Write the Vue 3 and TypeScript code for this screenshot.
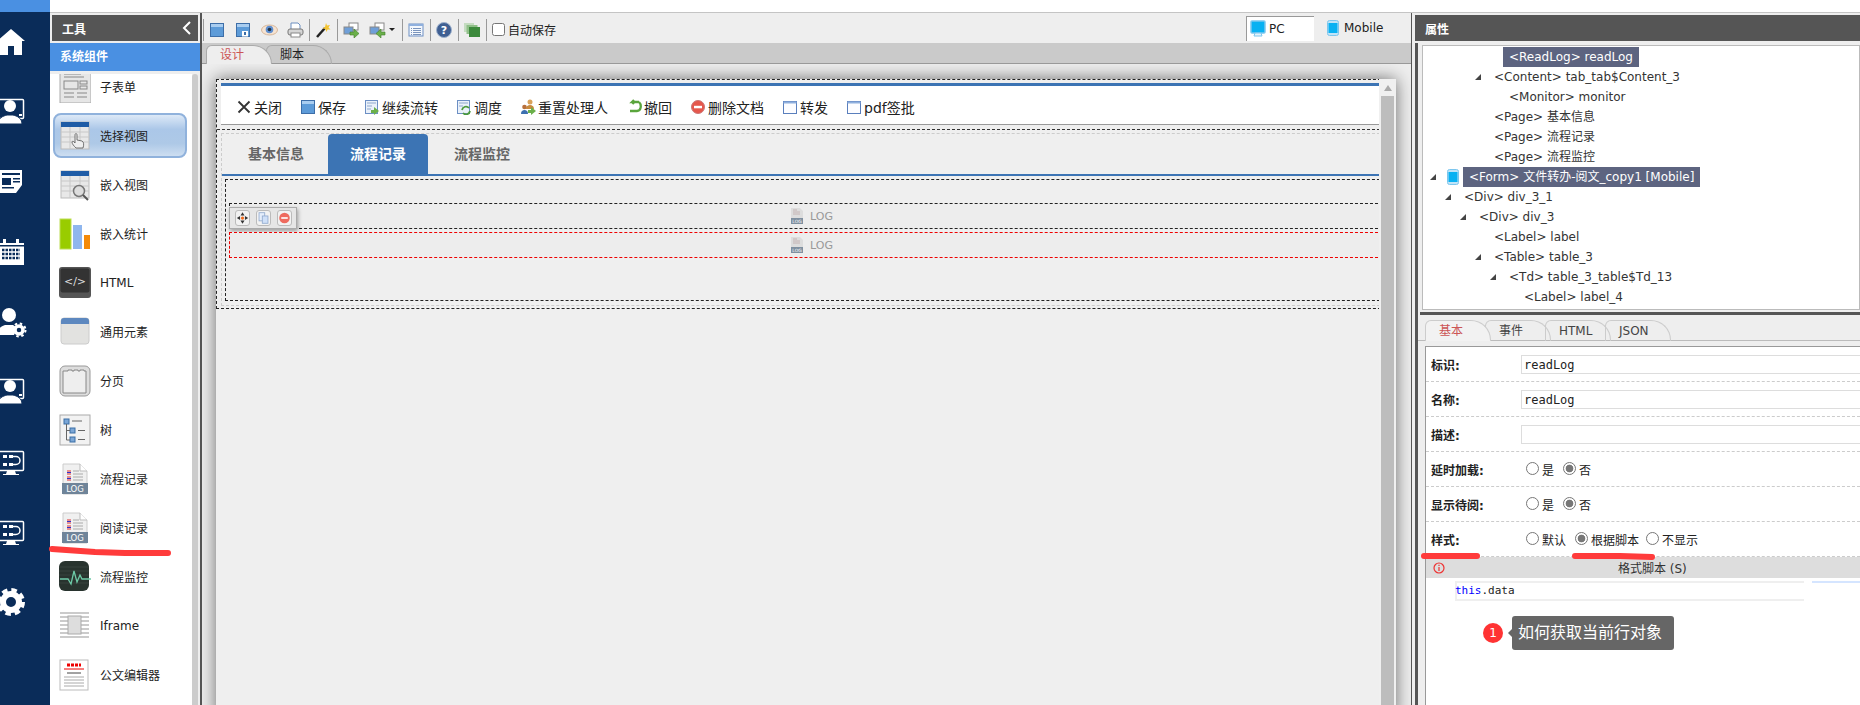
<script setup lang="ts">
const monitor = '<rect x="3.5" y="5.5" width="25" height="19" rx="1" fill="none" stroke="#fff" stroke-width="1.5"/><path d="M12 25h8l1 3h3v1H8v-1h3z" fill="#fff"/>'
const person = '<rect x="3.5" y="3.5" width="25" height="19" rx="1" fill="none" stroke="#fff" stroke-width="1.5"/><circle cx="15" cy="10" r="6" fill="#fff"/><path d="M3 28c0-6 5-8 9-9h6c4 1 9 3 9 9z" fill="#fff" stroke="#0a2c59" stroke-width="1"/><rect x="24" y="18" width="3" height="2" fill="#fff"/>'
const flow = monitor + '<g fill="#fff"><rect x="8" y="9" width="4" height="3"/><rect x="14" y="9" width="4" height="3"/><rect x="8" y="17" width="4" height="3"/><rect x="14" y="17" width="4" height="3"/></g><path d="M18 10.500h3a4 4 0 0 1 0 8h-3" fill="none" stroke="#fff" stroke-width="1.500"/>'

const navIcons: string[] = [
  '<path d="M16 3 30 15h-3v14h-8v-9h-6v9H5V15H2z" fill="#fff"/>',
  person,
  '<path d="M5 4h22v15l-6 8H5z" fill="#fff"/><g fill="#0a2c59"><rect x="7" y="7" width="18" height="2"/><rect x="7" y="12" width="9" height="7"/><rect x="18" y="12" width="7" height="1.500"/><rect x="18" y="15" width="7" height="1.500"/><rect x="7" y="21" width="12" height="1.500"/></g>',
  '<path d="M3 7h26v22H3z" fill="#fff"/><rect x="8" y="3" width="3" height="6" fill="#fff"/><rect x="21" y="3" width="3" height="6" fill="#fff"/><rect x="3" y="9" width="26" height="1.500" fill="#0a2c59"/><path d="M7 14h18M7 18h18M7 22h18" stroke="#0a2c59" stroke-width="2.500" stroke-dasharray="2.500 1"/>',
  '<circle cx="14" cy="9" r="7" fill="#fff"/><path d="M2 29c0-7 5-9 8-10h8l3 2-2 8z" fill="#fff"/><circle cx="24" cy="24" r="4" fill="none" stroke="#fff" stroke-width="3.500"/><circle cx="24" cy="24" r="6.500" fill="none" stroke="#fff" stroke-width="2" stroke-dasharray="2.500 2.600"/>',
  person,
  flow,
  flow,
  '<circle cx="16" cy="16" r="8" fill="none" stroke="#fff" stroke-width="6"/><circle cx="16" cy="16" r="12" fill="none" stroke="#fff" stroke-width="4" stroke-dasharray="5.500 3.920"/>',
]

const gridBase = '<rect x="2" y="2" width="28" height="27" fill="#e8e8e8" stroke="#bbb"/><rect x="2" y="2" width="28" height="5" fill="#1f5ca6"/><path d="M2 12h28M2 17h28M2 22h28M11 7v22M21 7v22" stroke="#c8c8c8"/>'
const logPage = '<path d="M4 1h17l7 7v23H4z" fill="#f0f0f0" stroke="#ccc"/><path d="M21 1v7h7" fill="#fff" stroke="#bbb"/><g stroke-width="1.200"><path d="M8 8h4M8 11h4M8 14h4M8 17h4" stroke="#d33"/><path d="M8 9.500h4M8 15.500h4" stroke="#33c"/><path d="M14 8h6M14 11h10M14 14h10M14 17h10" stroke="#aaa"/></g><rect x="3" y="20" width="26" height="11" fill="#6f8499"/><text x="16" y="29" text-anchor="middle" font-size="8.500" font-family="DejaVu Sans" fill="#fff">LOG</text>'

const toolIcons: Record<string, string> = {
  subform: '<path d="M1-4h26l5 5v31H1z" fill="#e6e6e6" stroke="#aaa"/><g fill="none" stroke="#888"><path d="M5 3h17M5 6h20"/><rect x="5" y="10" width="14" height="8"/><rect x="21" y="10" width="7" height="3"/><rect x="21" y="15" width="7" height="3"/><path d="M5 22h10M18 22h10M5 26h10M18 26h10"/></g>',
  select: gridBase + '<path d="M17 28c-2-2-4-4-4-6 0-1 2-1 3 1v-8c0-2 2-2 2 0v5l5 1c2 1 2 4 1 7z" fill="#eee" stroke="#555" stroke-width=".8"/>',
  embed: gridBase + '<circle cx="20" cy="22" r="5.500" fill="#ddd" stroke="#777" stroke-width="1.500"/><path d="m24 26 5 5" stroke="#555" stroke-width="2"/>',
  chart: '<rect x="1" y="1" width="11" height="30" fill="#9c0"/><rect x="1" y="1" width="11" height="30" fill="none" stroke="#bdde55"/><rect x="14" y="7" width="9" height="24" fill="#8fb6ee"/><rect x="25" y="17" width="6" height="14" fill="#f58a07"/>',
  html: '<rect x="0" y="0" width="32" height="31" rx="3" fill="#555"/><rect x="1.500" y="1.500" width="29" height="24" rx="2" fill="#333"/><text x="16" y="18" text-anchor="middle" font-size="11" font-family="DejaVu Sans" fill="#ddd">&lt;/&gt;</text>',
  elem: '<rect x="2" y="2" width="28" height="26" rx="3" fill="#e2e2e0" stroke="#ccc"/><path d="M2 8V5a3 3 0 0 1 3-3h22a3 3 0 0 1 3 3v3z" fill="#5d88bf"/>',
  page: '<rect x="1" y="1" width="30" height="30" rx="5" fill="#ddd" stroke="#999"/><path d="M4 28V6h5v-1h4v1h2v-1h4v1h2v-1h4v1h2v22z" fill="#eee" stroke="#888"/>',
  tree: '<rect x="1" y="1" width="30" height="30" fill="#f2f2f2" stroke="#aaa"/><g fill="#7ba6d6" stroke="#3a6ea5"><rect x="5" y="5" width="5" height="5"/><rect x="11" y="14" width="5" height="5"/><rect x="11" y="23" width="5" height="5"/></g><path d="M7.500 10v16H11M7.500 16.500H11M13 7h10M19 16.500h7M19 25.500h7" fill="none" stroke="#666"/>',
  log: logPage,
  mon: '<rect x="0" y="0" width="30" height="30" rx="6" fill="#28332e"/><path d="M0 6h30M0 10h30M0 14h30M0 18h30M0 22h30" stroke="#37423d"/><path d="M1 18h8l3 5 3-13 3 11 3-7 2 4h9" fill="none" stroke="#6dc9a6" stroke-width="1.300"/>',
  frame: '<path d="M1 3h29M1 7h29M1 11h29M1 15h29M1 19h29M1 23h29M1 27h29" stroke="#bbb" stroke-width="1.500"/><rect x="9" y="6" width="13" height="18" fill="#ddd" stroke="#aaa"/>',
  doc: '<rect x="1" y="1" width="28" height="30" fill="#fff" stroke="#bbb"/><path d="M8 6h14" stroke="#e00" stroke-width="3" stroke-dasharray="3 1"/><path d="M5 10h20" stroke="#e00"/><path d="M8 14h14" stroke="#444"/><path d="M5 18h20M5 21h20M5 24h20M5 27h20" stroke="#aaa"/>',
}

const tools = [
  { name: '子表单', icon: 'subform' }, { name: '选择视图', icon: 'select', on: true }, { name: '嵌入视图', icon: 'embed' },
  { name: '嵌入统计', icon: 'chart' }, { name: 'HTML', icon: 'html' }, { name: '通用元素', icon: 'elem' }, { name: '分页', icon: 'page' },
  { name: '树', icon: 'tree' }, { name: '流程记录', icon: 'log' }, { name: '阅读记录', icon: 'log' }, { name: '流程监控', icon: 'mon' },
  { name: 'Iframe', icon: 'frame' }, { name: '公文编辑器', icon: 'doc' },
]

const floppy = (door: string) => `<rect x="1.500" y="1.500" width="13" height="13" fill="#5d9bd8" stroke="#3d6ea8"/><path d="M2 2h12v3H2z" fill="#a9cdf0"/>${door}`
const bar: Record<string, string> = {
  save: floppy(''),
  saveas: floppy('<rect x="7" y="9" width="6" height="5.500" fill="#fff"/><rect x="9" y="10" width="2" height="3" fill="#3d6ea8"/>'),
  eye: '<ellipse cx="8.500" cy="8" rx="8" ry="5" fill="#f5e3d2" stroke="#d8b79a"/><circle cx="8.500" cy="7.500" r="3.800" fill="#5f8fd0"/><circle cx="8.500" cy="7.500" r="1.800" fill="#234"/>',
  print: '<path d="M4 1h7l2 2v5H4z" fill="#fff" stroke="#6d8fc0"/><rect x="1" y="7" width="15" height="6" rx="2" fill="#d5d5d5" stroke="#777"/><rect x="4" y="11" width="9" height="4" fill="#fff" stroke="#888"/>',
  wand: '<path d="m2 15 8-9" stroke="#222" stroke-width="2.500"/><path d="m11 1 1 2.500 3-.5-1.500 2.500 2 2-3 0-1 2.500-1-3-3-.5 2.500-1.500z" fill="#f4c430"/>',
  imp: '<rect x="6" y="1" width="9" height="7" fill="#fff" stroke="#888"/><rect x="1" y="5" width="9" height="7" fill="#6f9fd8" stroke="#888"/><path d="M7 10h4V7l5 4.500-5 4.500v-3H7z" fill="#6bb04a" stroke="#3f7d2c" stroke-width=".6"/>',
  exp: '<rect x="6" y="1" width="9" height="7" fill="#fff" stroke="#888"/><rect x="1" y="5" width="9" height="7" fill="#6f9fd8" stroke="#888"/><path d="M16 10h-4V7L7 11.500l5 4.500v-3h4z" fill="#6bb04a" stroke="#3f7d2c" stroke-width=".6"/>',
  list: '<rect x="1" y="2" width="14" height="12" fill="#f4f8fd" stroke="#6c8fc4"/><rect x="1" y="2" width="14" height="2" fill="#8fb0de"/><path d="M3 6.500h1M5 6.500h8M3 8.500h1M5 8.500h8M3 10.500h1M5 10.500h8M3 12.500h1M5 12.500h8" stroke="#7a94bd"/>',
  help: '<circle cx="8" cy="8" r="7.500" fill="#3f5f92" stroke="#9db0cc"/><text x="8" y="12" text-anchor="middle" font-size="11" font-weight="700" font-family="DejaVu Sans" fill="#fff">?</text>',
  green: '<rect x="0" y="1" width="10" height="9" fill="#c4dcc0"/><rect x="2.500" y="3" width="11" height="9" fill="#8fbf88"/><rect x="5" y="5" width="11" height="10" fill="#3c8a3c"/>',
  pc: '<rect x="1" y="1" width="14" height="12" rx="1" fill="#09b1f2" stroke="#7cc6ee" stroke-width="1.500"/><path d="M5 13h6l1 3H4z" fill="#e4f3fb" stroke="#7cc6ee"/>',
  mobile: '<rect x="2.500" y="0.500" width="11" height="15" rx="2" fill="#bfe3f7" stroke="#7cc6ee"/><rect x="3.500" y="3" width="9" height="10" fill="#09b1f2"/>',
  close: '<path d="m2.500 2.500 11 11m0-11-11 11" stroke="#333" stroke-width="1.800"/>',
  next: '<rect x="1.500" y="1.500" width="12" height="13" fill="#eaf1fa" stroke="#6c8fc4"/><path d="M3 4h9M3 7h5M3 10h4" stroke="#8fa8cc"/><path d="M7 11h3V8l5 4-5 4v-2H7z" fill="#6bb04a"/>',
  sched: '<rect x="1.500" y="1.500" width="12" height="13" fill="#eaf1fa" stroke="#6c8fc4"/><path d="M3 4h9M3 7h4" stroke="#8fa8cc"/><path d="M6 11a4 4 0 0 1 7-2M14 12a4 4 0 0 1-7 2" fill="none" stroke="#4c9a3c" stroke-width="1.800"/>',
  people: '<circle cx="10" cy="3" r="2.500" fill="#d9a25a"/><path d="M6 10c0-3 2-4 4-4s4 1 4 4z" fill="#c98a3c"/><circle cx="4.500" cy="8" r="2.300" fill="#b8703c"/><path d="M1 15c0-3 1.500-4 3.500-4s3.500 1 3.500 4z" fill="#3c70b0"/><path d="M8 11h3V8l5 4-5 4v-2H8z" fill="#6bb04a"/>',
  undo: '<path d="M13 3H6l2-2M6 3l2 2M13 3c3 3 2 9-2 9H4" fill="none" stroke="#5aa53c" stroke-width="2.300"/>',
  del: '<circle cx="8" cy="8" r="6.500" fill="#e5574c" stroke="#c77"/><rect x="4" y="6.800" width="8" height="2.500" fill="#fff"/>',
  win: '<rect x="1.500" y="2.500" width="13" height="12" fill="#fdfdff" stroke="#5a7fbd"/><rect x="1.500" y="2.500" width="13" height="2" fill="#8fb0de"/>',
  move: '<path d="M8 1 10.500 5h-5zM8 15l2.500-4h-5zM1 8l4-2.500v5zM15 8l-4-2.500v5z" fill="#333"/><circle cx="8" cy="8" r="2" fill="#f06a1d"/>',
  copy: '<rect x="2.500" y="1.500" width="7" height="10" fill="#e5eefb" stroke="#8fa8cc"/><rect x="6.500" y="5.500" width="7" height="9" fill="#cfe0f8" stroke="#8fa8cc"/>',
  rm: '<circle cx="8" cy="8" r="6.500" fill="#ee6a5e"/><rect x="4" y="7" width="8" height="2" fill="#fff"/>',
  logSmall: '<path d="M3 0h8l3 3v13H2V0z" fill="#ddd"/><path d="M4 2h4M4 4h7M4 6h7" stroke="#c4b4b4"/><rect x="2" y="10" width="12" height="6" fill="#7f90a0"/><text x="8" y="15" text-anchor="middle" font-size="4.500" font-family="DejaVu Sans" fill="#fff">LOG</text>',
}

const leftBtns = ['save', 'saveas', 'eye', 'print']
const actions = [
  { t: '关闭', i: 'close' }, { t: '保存', i: 'save' }, { t: '继续流转', i: 'next' }, { t: '调度', i: 'sched' },
  { t: '重置处理人', i: 'people' }, { t: '撤回', i: 'undo' }, { t: '删除文档', i: 'del' }, { t: '转发', i: 'win' }, { t: 'pdf签批', i: 'win' },
]
const tree = [
  { l: 4, t: '<ReadLog> readLog', sel: true },
  { l: 3, t: '<Content> tab_tab$Content_3', open: true },
  { l: 4, t: '<Monitor> monitor' },
  { l: 3, t: '<Page> 基本信息' }, { l: 3, t: '<Page> 流程记录' }, { l: 3, t: '<Page> 流程监控' },
  { l: 0, t: '<Form> 文件转办-阅文_copy1 [Mobile]', sel: true, open: true, form: true },
  { l: 1, t: '<Div> div_3_1', open: true }, { l: 2, t: '<Div> div_3', open: true },
  { l: 3, t: '<Label> label' }, { l: 3, t: '<Table> table_3', open: true },
  { l: 4, t: '<Td> table_3_table$Td_13', open: true }, { l: 5, t: '<Label> label_4' },
]
const inputs = [{ k: '标识:', v: 'readLog' }, { k: '名称:', v: 'readLog' }, { k: '描述:', v: '' }]
const radios = [
  { k: '延时加载:', o: [{ t: '是' }, { t: '否', on: true }] },
  { k: '显示待阅:', o: [{ t: '是' }, { t: '否', on: true }] },
  { k: '样式:', o: [{ t: '默认' }, { t: '根据脚本', on: true }, { t: '不显示' }] },
]
</script>

<template>
  <div class="app">
    <nav class="nav">
      <div class="nav-top"></div>
      <div class="nav-items">
        <div v-for="(n, i) in navIcons" :key="i" class="nav-item"><svg viewBox="0 0 32 32" width="32" height="32" v-html="n"></svg></div>
      </div>
    </nav>
    <div class="work">
      <div class="topline"></div>
      <div class="body">
        <aside class="tools">
          <div class="dark-head tools-head"><span>工具</span>
            <svg width="10" height="14" viewBox="0 0 10 14"><path d="M8 1 2 7l6 6" fill="none" stroke="#fff" stroke-width="2"/></svg>
          </div>
          <div class="tools-title">系统组件</div>
          <div class="tools-wrap">
            <div class="tools-list">
              <div v-for="t in tools" :key="t.name" class="tool" :class="{ on: t.on }">
                <svg viewBox="0 0 32 32" width="32" height="32" class="tool-icon" v-html="toolIcons[t.icon]"></svg>
                <span>{{ t.name }}</span>
              </div>
            </div>
            <div class="tools-scroll"></div>
          </div>
        </aside>

        <main class="main">
          <div class="bar">
            <i class="sep"></i>
            <span v-for="b in leftBtns" :key="b" class="btn"><svg width="17" height="16" viewBox="0 0 17 16" v-html="bar[b]"></svg></span>
            <i class="sep"></i>
            <span class="btn"><svg width="17" height="16" viewBox="0 0 17 16" v-html="bar.wand"></svg></span>
            <i class="sep"></i>
            <span class="btn"><svg width="17" height="16" viewBox="0 0 17 16" v-html="bar.imp"></svg></span>
            <span class="btn btn-menu"><svg width="17" height="16" viewBox="0 0 17 16" v-html="bar.exp"></svg><b class="caret"></b></span>
            <i class="sep"></i>
            <span class="btn"><svg width="16" height="16" viewBox="0 0 16 16" v-html="bar.list"></svg></span>
            <i class="sep"></i>
            <span class="btn"><svg width="16" height="16" viewBox="0 0 16 16" v-html="bar.help"></svg></span>
            <i class="sep"></i>
            <span class="btn"><svg width="16" height="16" viewBox="0 0 16 16" v-html="bar.green"></svg></span>
            <i class="sep"></i>
            <label class="auto"><input type="checkbox" />自动保存</label>
            <div class="device device-on"><svg width="16" height="17" viewBox="0 0 16 17" v-html="bar.pc"></svg>PC</div>
            <div class="device device-off"><svg width="16" height="16" viewBox="0 0 16 16" v-html="bar.mobile"></svg>Mobile</div>
          </div>
          <div class="strip">
            <span class="stab stab-on">设计</span>
            <span class="stab">脚本</span>
          </div>
          <div class="canvas">
            <div class="card">
              <div class="card-view">
                <div class="form-outer">
                  <div class="actions">
                    <span v-for="a in actions" :key="a.t" class="action"><svg width="16" height="16" viewBox="0 0 16 16" v-html="bar[a.i]"></svg>{{ a.t }}</span>
                  </div>
                  <div class="tab-outer">
                    <div class="tab-inner">
                      <div class="ftabs">
                        <span class="ftab">基本信息</span>
                        <span class="ftab ftab-on">流程记录</span>
                        <span class="ftab ftab-last">流程监控</span>
                      </div>
                      <div class="page">
                        <div class="log-box">
                          <span class="log"><svg width="16" height="20" viewBox="0 0 16 16" v-html="bar.logSmall"></svg>LOG</span>
                          <div class="float">
                            <span class="fbtn"><svg width="14" height="14" viewBox="0 0 16 16" v-html="bar.move"></svg></span>
                            <span class="fbtn"><svg width="14" height="14" viewBox="0 0 16 16" v-html="bar.copy"></svg></span>
                            <span class="fbtn"><svg width="14" height="14" viewBox="0 0 16 16" v-html="bar.rm"></svg></span>
                          </div>
                        </div>
                        <div class="log-box log-red">
                          <span class="log"><svg width="16" height="20" viewBox="0 0 16 16" v-html="bar.logSmall"></svg>LOG</span>
                        </div>
                      </div>
                    </div>
                  </div>
                </div>
              </div>
              <div class="card-scroll">
                <div class="arrow-up"></div>
                <div class="card-thumb"></div>
              </div>
            </div>
          </div>
        </main>

        <aside class="props">
          <div class="dark-head props-head">属性</div>
          <div class="props-body">
            <div class="tree">
              <div v-for="(r, i) in tree" :key="i" class="row" :style="{ paddingLeft: 7 + r.l * 15 + 'px' }">
                <span class="tw"><i v-if="r.open"></i></span>
                <svg v-if="r.form" class="row-icon" width="12" height="16" viewBox="2 0 12 16" v-html="bar.mobile"></svg>
                <span class="node" :class="{ sel: r.sel }">{{ r.t }}</span>
              </div>
            </div>
            <div class="props-rule"></div>
            <div class="ptabs">
              <span class="ptab ptab-on">基本</span>
              <span class="ptab">事件</span>
              <span class="ptab">HTML</span>
              <span class="ptab">JSON</span>
            </div>
            <div class="pform">
              <div v-for="f in inputs" :key="f.k" class="frow">
                <b>{{ f.k }}</b>
                <input class="field" type="text" readonly :value="f.v" />
              </div>
              <div v-for="f in radios" :key="f.k" class="frow">
                <b>{{ f.k }}</b>
                <div class="radios">
                  <label v-for="o in f.o" :key="o.t" class="radio"><input type="radio" :checked="o.on" :name="f.k" />{{ o.t }}</label>
                </div>
              </div>
              <div class="script-head">
                <svg width="12" height="12" viewBox="0 0 12 12"><circle cx="6" cy="6" r="5" fill="none" stroke="#e33" stroke-width="1.200"/><path d="M6 2.800v1.200M6 5v4" stroke="#e33" stroke-width="1.200"/></svg>
                <span>格式脚本 (S)</span>
              </div>
              <div class="editor">
                <div class="code"><span class="kw">this</span>.data</div>
                <div class="minimap"></div>
              </div>
              <div class="tip-row">
                <span class="badge">1</span>
                <div class="tip">如何获取当前行对象</div>
              </div>
            </div>
          </div>
        </aside>
      </div>
    </div>
    <svg class="marks" width="1860" height="705" viewBox="0 0 1860 705">
      <path d="M52 549 95 552 125 553 168 553" />
      <path d="M1424 556H1477" />
      <path d="M1575 556 1620 556 1652 557" />
    </svg>
  </div>
</template>

<style scoped>
.app { position: relative; display: flex; width: 1860px; height: 705px; overflow: hidden; background: #eee; color: #222; font: 12px "DejaVu Sans", "Noto Sans CJK SC", sans-serif; }
.nav { width: 50px; flex: none; background: #0a2c59; overflow: hidden; }
.nav-top { height: 12px; background: #4a90e2; }
.nav-items { margin-top: -5px; margin-left: -5px; }
.nav-item { height: 70px; display: flex; align-items: center; }
.work { flex: 1; min-width: 0; display: flex; flex-direction: column; }
.topline { height: 12px; flex: none; background: #fff; border-bottom: 1px solid #c4c4c4; }
.body { flex: 1; min-height: 0; display: flex; }
.dark-head { height: 26px; background: #555; color: #fff; font-weight: 700; display: flex; align-items: center; }
.tools { width: 150px; flex: none; padding-top: 2px; display: flex; flex-direction: column; }
.tools-head { margin: 0 2px; padding: 0 6px 0 10px; justify-content: space-between; }
.tools-title { margin-top: 2px; height: 28px; line-height: 28px; background: #4a90e2; color: #fff; font-weight: 700; padding-left: 10px; }
.tools-wrap { margin-top: 3px; flex: 1; min-height: 0; display: flex; overflow: hidden; background: #eee; }
.tools-list { width: 142px; flex: none; background: #fff; margin-top: -12px; }
.tool { height: 49px; box-sizing: border-box; display: flex; align-items: center; padding-left: 9px; }
.tool-icon { flex: none; margin-right: 9px; overflow: hidden; }
.tool.on { height: 45px; margin: 2px 5px 2px 3px; padding-left: 4px; box-sizing: border-box; border: 2px solid #90b2dc; border-radius: 8px; background: linear-gradient(#dde9f7, #abc7e8 35%, #aec9e7 70%, #cddef1); }
.tools-scroll { width: 6px; flex: none; background: #ccc; border-radius: 3px 3px 0 0; }

.main { width: 1212px; flex: none; box-sizing: border-box; border-left: 2px solid #555; border-right: 1px solid #555; display: flex; flex-direction: column; min-width: 0; }
.bar { height: 30px; flex: none; box-sizing: border-box; padding-top: 3px; display: flex; align-items: center; background: #eee; }
.sep { width: 2px; height: 22px; box-sizing: border-box; border-right: 1px solid #999; flex: none; }
.btn { width: 26px; flex: none; display: flex; justify-content: center; align-items: center; }
.btn-menu { width: 37px; justify-content: flex-start; padding-left: 5px; box-sizing: border-box; }
.caret { margin-left: 3px; border: 3px solid transparent; border-top: 3px solid #222; border-bottom: 0; }
.auto { display: flex; align-items: center; margin-left: 5px; }
.auto input { margin: 0 3px 0 0; width: 13px; height: 13px; }
.device { display: flex; align-items: center; height: 25px; box-sizing: border-box; margin-top: -3px; }
.device-on { margin-left: auto; width: 68px; background: #fff; border-top: 1px solid #999; border-left: 1px solid #999; padding-left: 3px; gap: 3px; }
.device-off { width: 97px; padding-left: 11px; gap: 3px; }
.strip { height: 21px; flex: none; box-sizing: border-box; background: #cacaca; border-bottom: 1px solid #999; padding: 2px 0 0 4px; display: flex; }
.stab { width: 66px; height: 19px; box-sizing: border-box; border: 1px solid #aaa; border-bottom: 0; border-radius: 6px 20px 0 0; padding-left: 13px; line-height: 18px; margin-right: -6px; }
.stab-on { background: #eee; color: #c55; position: relative; z-index: 1; height: 19px; }
.canvas { flex: 1; min-height: 0; padding: 15px 0 0 14px; overflow: hidden; background: #eee; }
.card { width: 1180px; height: 640px; display: flex; background: #efefef; box-shadow: 0 0 16px rgba(0, 0, 0, .55); }
.card-view { width: 1163px; flex: none; overflow: hidden; }
.card-scroll { width: 17px; flex: none; background: #f0f0f0; }
.arrow-up { height: 17px; display: flex; justify-content: center; align-items: center; }
.arrow-up::before { content: ""; border: 4px solid transparent; border-bottom: 6px solid #aaa; border-top: 0; }
.card-thumb { margin: 0 2px; height: 640px; background: #bdbdbd; }
.form-outer { width: 1190px; height: 230px; box-sizing: border-box; border: 1px dashed #222; padding: 3px 0 0 4px; }
.actions { height: 42px; box-sizing: border-box; border-top: 3px solid #3c74b4; border-bottom: 1px solid #999; background: #fff; display: flex; align-items: center; padding: 4px 0 0 15px; font-size: 14px; gap: 18px; }
.action { display: flex; align-items: center; gap: 2px; }
.tab-outer { margin-top: 4px; margin-left: -4px; padding: 3px 0 0 4px; border-top: 1px dashed #333; }
.tab-inner { border-top: 1px dashed #ccc; border-left: 1px dashed #ccc; border-bottom: 1px dashed #ccc; height: 173px; box-sizing: border-box; }
.ftabs { height: 42px; box-sizing: border-box; border-bottom: 2px solid #3c74b4; display: flex; padding-left: 4px; gap: 2px; font-size: 14px; font-weight: 700; color: #666; }
.ftab { width: 100px; height: 40px; line-height: 40px; text-align: center; }
.ftab-on { background: #3c74b4; color: #fff; border-radius: 4px 4px 0 0; }
.ftab-last { margin-left: 2px; }
.page { margin: 3px 0 0 3px; height: 122px; box-sizing: border-box; border: 1px dashed #222; border-right: 0; padding: 23px 0 0 3px; }
.log-box { position: relative; width: 1164px; height: 26px; box-sizing: border-box; border: 1px dashed #222; display: flex; justify-content: center; align-items: center; margin-bottom: 3px; background: #ededed; }
.log-red { border-color: #e00; }
.log { display: flex; align-items: center; gap: 5px; color: #999; font-size: 11px; }
.float { position: absolute; left: -1px; top: 3px; width: 68px; height: 22px; box-sizing: border-box; background: #e6e6e6; border: 1px solid #aaa; box-shadow: 1px 2px 4px rgba(0, 0, 0, .35); display: flex; align-items: center; padding-left: 5px; gap: 6px; }
.fbtn { width: 15px; height: 16px; box-sizing: border-box; border: 1px solid #bbb; border-radius: 3px; background: #f2f2f2; display: flex; align-items: center; justify-content: center; }

.props { flex: 1; min-width: 0; padding: 2px 0 0 3px; display: flex; flex-direction: column; }
.props-head { flex: none; padding-left: 10px; }
.props-body { margin-top: 2px; flex: 1; min-height: 0; border-left: 3px solid #555; display: flex; flex-direction: column; }
.tree { margin: 2px 0 0 4px; height: 265px; flex: none; box-sizing: border-box; border: 1px solid #bbb; background: #fff; padding-top: 1px; }
.row { height: 20px; display: flex; align-items: center; white-space: nowrap; }
.tw { width: 13px; flex: none; }
.tw i { display: block; width: 6px; height: 6px; background: #444; clip-path: polygon(100% 0, 100% 100%, 0 100%); }
.row-icon { margin: 0 4px; flex: none; }
.node { padding: 0 6px; height: 20px; line-height: 20px; color: #333; }
.node.sel { background: #5d6480; color: #fff; }
.props-rule { flex: none; margin: 2px 0 0 2px; height: 3px; background: #555; }
.ptabs { height: 26px; flex: none; box-sizing: border-box; border-bottom: 1px solid #bbb; padding: 5px 0 0 7px; display: flex; }
.ptab { width: 66px; height: 21px; box-sizing: border-box; border: 1px solid #ccc; border-bottom: 0; border-radius: 6px 20px 0 0; padding-left: 13px; line-height: 20px; margin-right: -6px; color: #444; }
.ptab-on { color: #c55; background: #f2f2f2; position: relative; z-index: 1; }
.pform { margin: 5px 0 0 7px; flex: 1; min-height: 0; background: #fff; border-top: 1px solid #999; border-left: 1px solid #999; overflow: hidden; }
.frow { height: 35px; box-sizing: border-box; border-bottom: 1px dashed #ccc; display: flex; align-items: center; padding-left: 5px; background: #fff; }
.frow b { width: 90px; flex: none; }
.field { flex: 1; min-width: 0; height: 19px; box-sizing: border-box; border: 1px solid #ddd; border-right: 0; outline: 0; padding: 1px 2px 0; font: 12px "DejaVu Sans Mono", monospace; color: #222; background: #fff; }
.radios { display: flex; padding-left: 5px; gap: 9px; }
.radio { display: flex; align-items: center; gap: 3px; }
.radio:nth-child(3) { margin-left: -2px; }
.radio input { appearance: none; margin: -2px 0 0; width: 13px; height: 13px; border: 1px solid #777; border-radius: 50%; background: #fff; }
.radio input:checked { background: radial-gradient(circle, #777 0 3.5px, #fff 4.2px); }
.script-head { height: 21px; background: #ddd; display: flex; align-items: center; padding-left: 7px; color: #333; }
.script-head span { margin-left: 173px; }
.editor { margin: 3px 0 0 29px; display: flex; }
.code { width: 349px; height: 20px; flex: none; box-sizing: border-box; border: 2px solid #efefef; border-right: 0; text-indent: -2px; font: 11px/16px "DejaVu Sans Mono", monospace; color: #222; }
.kw { color: #00f; }
.minimap { margin-left: 8px; flex: 1; height: 2px; background: #d5e5ff; }
.tip-row { margin: 15px 0 0 57px; display: flex; align-items: center; }
.badge { width: 20px; height: 20px; border-radius: 50%; background: #f33; color: #fff; text-align: center; line-height: 20px; flex: none; margin-right: 9px; }
.tip { position: relative; width: 162px; height: 34px; box-sizing: border-box; background: #666; color: #fff; border-radius: 3px; font-size: 16px; line-height: 34px; padding-left: 6px; white-space: nowrap; }
.tip::before { content: ""; position: absolute; left: -4px; top: 13px; border: 4px solid transparent; border-right-color: #666; border-left: 0; }
.marks { position: absolute; left: 0; top: 0; pointer-events: none; }
.marks path { fill: none; stroke: #ff3b3b; stroke-width: 6; stroke-linecap: round; stroke-linejoin: round; }
</style>

<style>
html, body { margin: 0; overflow: hidden; }
</style>
